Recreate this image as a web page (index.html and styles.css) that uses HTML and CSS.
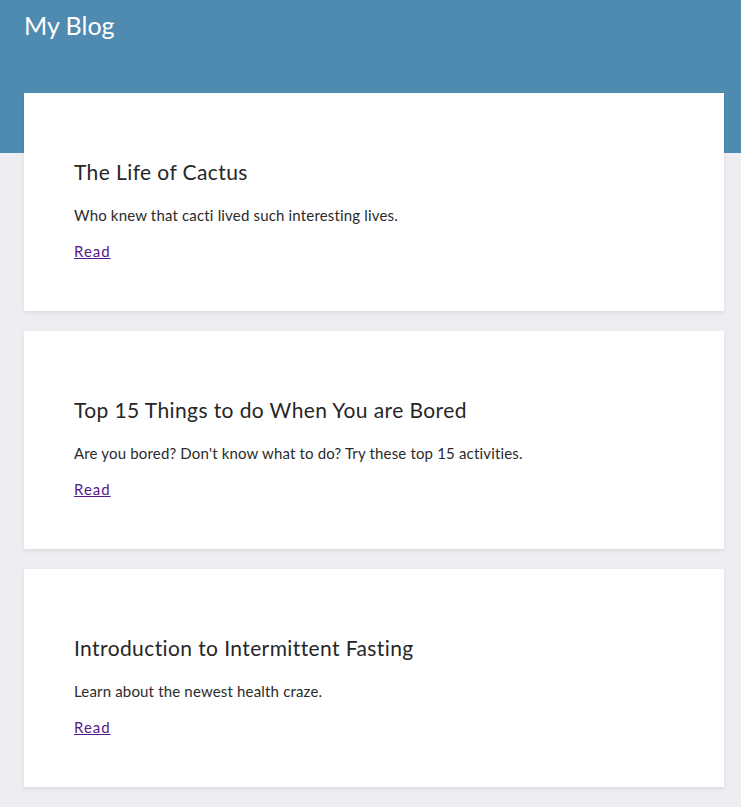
FILE: index.html
```html
<!DOCTYPE html>
<html lang="en">
<head>
<meta charset="utf-8">
<title>My Blog</title>
<link rel="stylesheet" href="styles.css">
</head>
<body>
<header class="site-header">
  <h1 class="site-title">My Blog</h1>
</header>
<main class="posts">
  <article class="card">
    <h2 class="card-title">The Life of Cactus</h2>
    <p class="card-text">Who knew that cacti lived such interesting lives.</p>
    <a class="card-link" href="#">Read</a>
  </article>
  <article class="card">
    <h2 class="card-title">Top 15 Things to do When You are Bored</h2>
    <p class="card-text">Are you bored? Don't know what to do? Try these top 15 activities.</p>
    <a class="card-link" href="#">Read</a>
  </article>
  <article class="card">
    <h2 class="card-title">Introduction to Intermittent Fasting</h2>
    <p class="card-text">Learn about the newest health craze.</p>
    <a class="card-link" href="#">Read</a>
  </article>
</main>
</body>
</html>
```
FILE: styles.css
```css
html, body {
  margin: 0;
  padding: 0;
}
body {
  background: #eeedf2;
  font-family: Lato, "Open Sans", sans-serif;
  color: #2b2b2b;
}
.site-header {
  background: #4f8bb0;
  height: 153px;
  padding: 0 24px;
  box-sizing: border-box;
}
.site-title {
  margin: 0;
  padding-top: 10px;
  font-size: 25px;
  line-height: 30px;
  font-weight: 400;
  color: #ffffff;
}
.posts {
  margin-top: -60px;
  padding: 0 0 20px 24px;
  display: flex;
  flex-direction: column;
  gap: 20px;
}
.card {
  width: 700px;
  height: 218px;
  box-sizing: border-box;
  background: #ffffff;
  padding: 65px 50px 0 50px;
  box-shadow: 0 2px 4px rgba(0, 0, 0, 0.08);
}
.card-title {
  margin: 0;
  font-size: 21px;
  line-height: 28px;
  font-weight: 400;
  letter-spacing: 0.4px;
  color: #262626;
}
.card-text {
  margin: 19px 0 0;
  font-size: 15px;
  line-height: 20px;
  letter-spacing: 0.17px;
  color: #2b2b2b;
}
.card-link {
  display: inline-block;
  margin-top: 16px;
  font-size: 15px;
  line-height: 20px;
  letter-spacing: 1px;
  color: #551a8b;
  text-decoration: underline;
}
```
